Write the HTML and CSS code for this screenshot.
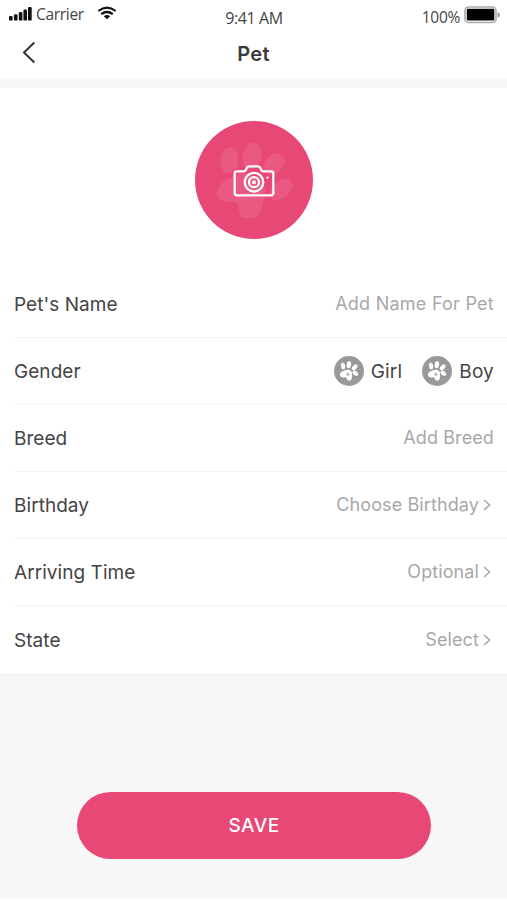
FILE: index.html
```html
<!DOCTYPE html>
<html lang="en">
<head>
<meta charset="utf-8">
<title>Pet</title>
<link rel="stylesheet" href="styles.css">
</head>
<body>
<svg class="defs" aria-hidden="true">
  <symbol id="paw" viewBox="0 0 76 76">
    <ellipse cx="12.5" cy="18.5" rx="9.2" ry="13" transform="rotate(3 12.5 18.5)"/>
    <ellipse cx="35" cy="13.8" rx="9.4" ry="13.3" transform="rotate(14 35 13.8)"/>
    <ellipse cx="57" cy="22" rx="8.8" ry="12" transform="rotate(45 57 22)"/>
    <ellipse cx="64" cy="47.5" rx="8.5" ry="13" transform="rotate(50 64 47.5)"/>
    <path d="M15 35C30 26 49 36 49 51C47 57 46 60 45 66C43 75 34 79 27 76C20 73 23 63 19 60C12 59 0 61 0 52C0 44 7 38 15 35Z"/>
  </symbol>
  <symbol id="paw-small" viewBox="0 0 22 22">
    <ellipse cx="5.1" cy="6" rx="2.1" ry="3.3" transform="rotate(-8 5.1 6)"/>
    <ellipse cx="10.9" cy="4.7" rx="2.2" ry="3.6" transform="rotate(10 10.9 4.7)"/>
    <ellipse cx="16.6" cy="7.4" rx="2.1" ry="3.5" transform="rotate(42 16.6 7.4)"/>
    <ellipse cx="17.4" cy="13.3" rx="2.1" ry="3.2" transform="rotate(-52 17.4 13.3)"/>
    <path fill-rule="evenodd" d="M6.2 10.6C9.5 8.8 14 10 14.2 13.4C13.6 15.4 14.2 16.8 13.7 18.7C13 21 9.6 21.2 8.9 19.2C8.5 17.8 8.6 17.2 6.5 17.4C4 17.6 1.9 17 1.9 14.5C2 12.3 4.3 11.5 6.2 10.6ZM8.8 12.4V16L11.8 14.4Z"/>
  </symbol>
</svg>
<main class="screen">
  <header class="status">
    <div class="carrier">
      <svg class="signal" viewBox="0 0 24 14"><rect x="0" y="9" width="3.6" height="4.6" rx="1.2"/><rect x="4.9" y="7.2" width="3.6" height="6.4" rx="1.2"/><rect x="9.8" y="5" width="3.6" height="8.6" rx="1.2"/><rect x="14.4" y="2.5" width="3.6" height="11.1" rx="1.2"/><rect x="19" y="0" width="3.7" height="13.6" rx="1.2"/></svg>
      <span class="carrier-name">Carrier</span>
      <svg class="wifi" viewBox="0 0 20 14"><path d="M1.3 5Q10-1.8 18.7 5M4.2 8.2Q10 3.8 15.8 8.2" fill="none" stroke="#111" stroke-width="2.2"/><path d="M6.8 10.3Q10 7.9 13.2 10.3L10 13.2Z" fill="#111"/></svg>
    </div>
    <span class="time">9:41 AM</span>
    <div class="power"><span>100%</span>
      <svg class="battery" viewBox="0 0 37 18"><rect x="1" y="1" width="31" height="15.5" rx="3.5" fill="#fff" stroke="#aaa" stroke-width="1.6"/><rect x="2.8" y="2.8" width="27.5" height="11.8" rx="1"/><path d="M33.6 6Q36 7 36 9T33.6 12Z" fill="#999"/></svg>
    </div>
  </header>
  <nav class="nav">
    <svg class="back" viewBox="0 0 14 23"><path d="M12.3 1.5L2 11.5L12.3 21.5" fill="none" stroke="#333" stroke-width="2"/></svg>
    <h1>Pet</h1>
  </nav>
  <section class="photo">
    <div class="avatar">
      <svg class="avatar-paw"><use href="#paw"/></svg>
      <svg class="camera" viewBox="0 0 42 32"><g fill="none" stroke="#fff" stroke-width="2.3"><path d="M4 6.3H11Q12.8 6 13.6 3.2Q14.2 1.4 16 1.4H25Q26.8 1.4 27.5 3.2Q28.3 6 30 6.3H38Q40.3 6.3 40.3 8.5V28Q40.3 30.3 38 30.3H4Q1.7 30.3 1.7 28V8.5Q1.7 6.3 4 6.3Z"/><circle cx="21" cy="17.2" r="9.3"/><circle cx="21" cy="17.2" r="5"/></g><circle cx="21" cy="17.2" r="2" fill="#fff"/><circle cx="34.6" cy="12.6" r="1.2" fill="#fff"/></svg>
    </div>
  </section>
  <section class="form">
    <div class="row"><span class="label">Pet's Name</span><span class="value name">Add Name For Pet</span></div>
    <div class="row"><span class="label">Gender</span>
      <div class="options">
        <span class="option"><span class="dot"><svg class="small-paw"><use href="#paw-small"/></svg></span><span>Girl</span></span>
        <span class="option"><span class="dot"><svg class="small-paw"><use href="#paw-small"/></svg></span><span>Boy</span></span>
      </div>
    </div>
    <div class="row"><span class="label">Breed</span><span class="value">Add Breed</span></div>
    <div class="row"><span class="label">Birthday</span><span class="value pick">Choose Birthday<svg class="more" viewBox="0 0 8 12"><path d="M1 1L6.5 6L1 11"/></svg></span></div>
    <div class="row"><span class="label">Arriving Time</span><span class="value pick">Optional<svg class="more" viewBox="0 0 8 12"><path d="M1 1L6.5 6L1 11"/></svg></span></div>
    <div class="row"><span class="label">State</span><span class="value pick">Select<svg class="more" viewBox="0 0 8 12"><path d="M1 1L6.5 6L1 11"/></svg></span></div>
  </section>
  <button class="save">SAVE</button>
</main>
</body>
</html>
```
FILE: styles.css
```css
* { box-sizing: border-box; }
body { margin: 0; background: #f7f7f7; font-family: Inter, "Liberation Sans", sans-serif; color: #444; }
.defs { display: block; width: 0; height: 0; }
.screen { display: flex; flex-direction: column; height: 900px; border-bottom: 2px solid #fcfcfc; }
.status { display: grid; grid-template-columns: 1fr auto 1fr; height: 32px; padding: 0 6px 0 9px; background: #fff; font: 15.5px/20px "Open Sans", sans-serif; color: #444; }
.carrier { display: flex; align-items: flex-start; padding-top: 5px; }
.signal { width: 24px; height: 14px; margin-top: 2px; fill: #111; }
.carrier-name { width: 48px; margin: -1px 13px 0 3px; letter-spacing: -0.3px; }
.wifi { width: 20px; height: 14px; margin-top: 1px; }
.time { padding-top: 8px; margin-right: 2px; font-size: 16px; letter-spacing: -0.4px; }
.power { display: flex; justify-content: flex-end; padding-top: 7px; letter-spacing: -0.3px; }
.battery { width: 37px; height: 18px; margin: -1px 0 0 4px; }
.nav { display: grid; grid-template-columns: 1fr auto 1fr; align-items: center; height: 46px; padding-bottom: 3px; background: #fff; }
.back { width: 14px; height: 23px; margin: 0 0 3px 22px; }
h1 { margin: 0; font-size: 20px; font-weight: 600; line-height: 24px; color: #3a3a3a; letter-spacing: 0.3px; }
.photo { height: 183px; margin-top: 10px; padding: 33px 0 0 1px; background: #fff; }
.avatar { position: relative; display: flex; width: 118px; height: 118px; margin: 0 auto; align-items: center; justify-content: center; border-radius: 50%; background: #e84876; }
.avatar-paw { position: absolute; left: 22px; top: 21px; width: 76px; height: 76px; fill: #fff; opacity: 0.09; }
.camera { position: relative; width: 42px; height: 32px; margin-top: 2px; }
.form { display: grid; grid-template-rows: repeat(6, 67.1px); height: 402.2px; background: #fff; }
.row { display: flex; align-items: center; justify-content: space-between; margin-left: 14px; padding: 1px 13px 0 0; border-bottom: 1px solid #f5f5f5; font-size: 19px; line-height: 24px; }
.row:last-child { border-bottom: 0; }
.label { letter-spacing: 0.05px; }
.value { margin-bottom: 1px; font-size: 18px; color: #a8a8a8; letter-spacing: 0.1px; }
.name { letter-spacing: 0.25px; }
.pick { display: flex; align-items: center; padding-right: 3px; }
.more { width: 8px; height: 12px; margin-left: 4px; fill: none; stroke: #a8a8a8; stroke-width: 1.6; }
.options, .option { display: flex; align-items: center; }
.options { gap: 20px; letter-spacing: 0.2px; }
.option { gap: 7px; }
.dot { display: flex; align-items: center; justify-content: center; width: 30px; height: 30px; margin-bottom: 1px; border-radius: 50%; background: #999; }
.small-paw { width: 22px; height: 22px; fill: #fff; }
.save { width: 354px; height: 67px; margin: 119px 76px 0 77px; padding: 0; border: 0; border-radius: 34px; background: #e84876; color: #fff; font: 500 19px/24px Inter, sans-serif; letter-spacing: 0.5px; }
```
